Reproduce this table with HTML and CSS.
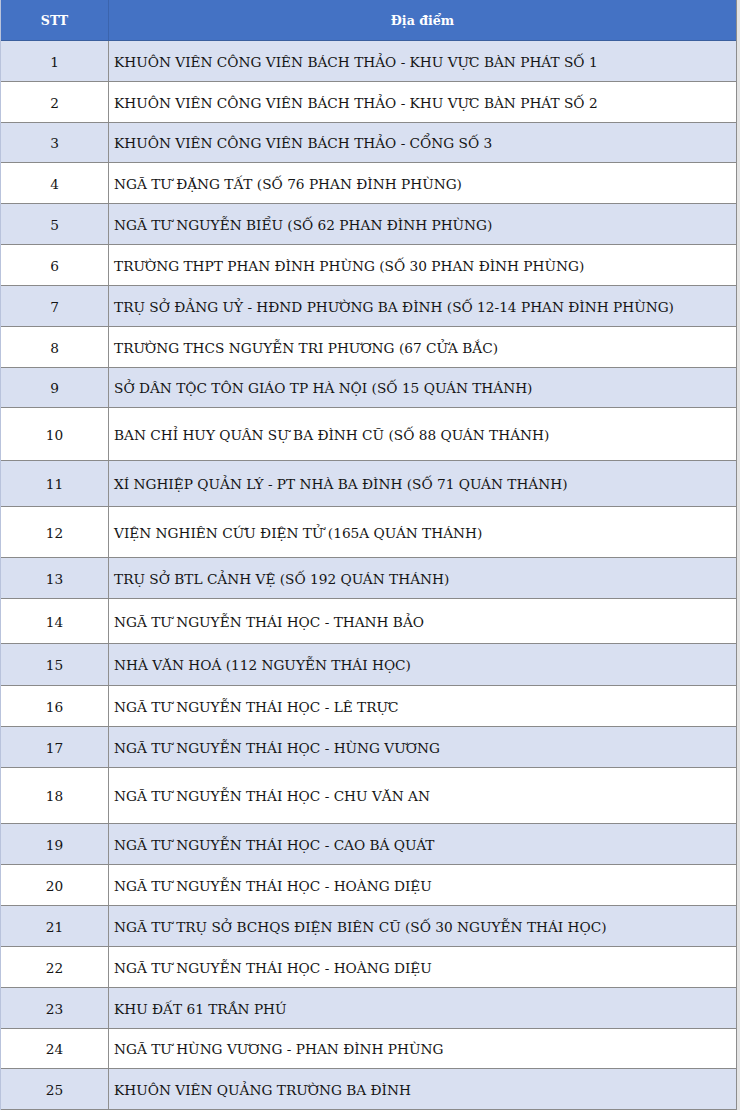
FILE: index.html
```html
<!DOCTYPE html>
<html lang="vi">
<head>
<meta charset="utf-8">
<title>Danh sách địa điểm</title>
<link rel="stylesheet" href="styles.css">
</head>
<body>
<div class="sheet">
  <div class="row head h41"><div class="no">STT</div><div class="place">Địa điểm</div></div>
  <div class="row alt h41"><div class="no">1</div><div class="place">KHUÔN VIÊN CÔNG VIÊN BÁCH THẢO - KHU VỰC BÀN PHÁT SỐ 1</div></div>
  <div class="row h41"><div class="no">2</div><div class="place">KHUÔN VIÊN CÔNG VIÊN BÁCH THẢO - KHU VỰC BÀN PHÁT SỐ 2</div></div>
  <div class="row alt h40"><div class="no">3</div><div class="place">KHUÔN VIÊN CÔNG VIÊN BÁCH THẢO - CỔNG SỐ 3</div></div>
  <div class="row h41"><div class="no">4</div><div class="place">NGÃ TƯ ĐẶNG TẤT (SỐ 76 PHAN ĐÌNH PHÙNG)</div></div>
  <div class="row alt h41"><div class="no">5</div><div class="place">NGÃ TƯ NGUYỄN BIỂU (SỐ 62 PHAN ĐÌNH PHÙNG)</div></div>
  <div class="row h41"><div class="no">6</div><div class="place">TRƯỜNG THPT PHAN ĐÌNH PHÙNG (SỐ 30 PHAN ĐÌNH PHÙNG)</div></div>
  <div class="row alt h41"><div class="no">7</div><div class="place">TRỤ SỞ ĐẢNG UỶ - HĐND PHƯỜNG BA ĐÌNH (SỐ 12-14 PHAN ĐÌNH PHÙNG)</div></div>
  <div class="row h41"><div class="no">8</div><div class="place">TRƯỜNG THCS NGUYỄN TRI PHƯƠNG (67 CỬA BẮC)</div></div>
  <div class="row alt h40"><div class="no">9</div><div class="place">SỞ DÂN TỘC TÔN GIÁO TP HÀ NỘI (SỐ 15 QUÁN THÁNH)</div></div>
  <div class="row h53"><div class="no">10</div><div class="place">BAN CHỈ HUY QUÂN SỰ BA ĐÌNH CŨ (SỐ 88 QUÁN THÁNH)</div></div>
  <div class="row alt h46"><div class="no">11</div><div class="place">XÍ NGHIỆP QUẢN LÝ - PT NHÀ BA ĐÌNH (SỐ 71 QUÁN THÁNH)</div></div>
  <div class="row h51"><div class="no">12</div><div class="place">VIỆN NGHIÊN CỨU ĐIỆN TỬ (165A QUÁN THÁNH)</div></div>
  <div class="row alt h41"><div class="no">13</div><div class="place">TRỤ SỞ BTL CẢNH VỆ (SỐ 192 QUÁN THÁNH)</div></div>
  <div class="row h45"><div class="no">14</div><div class="place">NGÃ TƯ NGUYỄN THÁI HỌC - THANH BẢO</div></div>
  <div class="row alt h42"><div class="no">15</div><div class="place">NHÀ VĂN HOÁ (112 NGUYỄN THÁI HỌC)</div></div>
  <div class="row h41"><div class="no">16</div><div class="place">NGÃ TƯ NGUYỄN THÁI HỌC - LÊ TRỰC</div></div>
  <div class="row alt h41"><div class="no">17</div><div class="place">NGÃ TƯ NGUYỄN THÁI HỌC - HÙNG VƯƠNG</div></div>
  <div class="row h56"><div class="no">18</div><div class="place">NGÃ TƯ NGUYỄN THÁI HỌC - CHU VĂN AN</div></div>
  <div class="row alt h41"><div class="no">19</div><div class="place">NGÃ TƯ NGUYỄN THÁI HỌC - CAO BÁ QUÁT</div></div>
  <div class="row h41"><div class="no">20</div><div class="place">NGÃ TƯ NGUYỄN THÁI HỌC - HOÀNG DIỆU</div></div>
  <div class="row alt h41"><div class="no">21</div><div class="place">NGÃ TƯ TRỤ SỞ BCHQS ĐIỆN BIÊN CŨ (SỐ 30 NGUYỄN THÁI HỌC)</div></div>
  <div class="row h41"><div class="no">22</div><div class="place">NGÃ TƯ NGUYỄN THÁI HỌC - HOÀNG DIỆU</div></div>
  <div class="row alt h41"><div class="no">23</div><div class="place">KHU ĐẤT 61 TRẦN PHÚ</div></div>
  <div class="row h40"><div class="no">24</div><div class="place">NGÃ TƯ HÙNG VƯƠNG - PHAN ĐÌNH PHÙNG</div></div>
  <div class="row alt h41"><div class="no">25</div><div class="place">KHUÔN VIÊN QUẢNG TRƯỜNG BA ĐÌNH</div></div>
</div>
</body>
</html>
```
FILE: styles.css
```css
html, body {
  margin: 0;
  padding: 0;
}
body {
  background: #e4e4e4;
  font-family: "DejaVu Serif", "Liberation Serif", serif;
  color: #141414;
}
.sheet {
  width: 737px;
  height: 1110px;
  overflow: hidden;
  background: #ffffff;
  border-right: 1px solid #8c8c8c;
  border-left: 1px solid #b9c3dc;
  box-sizing: border-box;
}
.row {
  display: grid;
  grid-template-columns: 108px 1fr;
  box-sizing: border-box;
  border-bottom: 1px solid #8a8a8a;
  background: #ffffff;
  font-size: 13.7px;
}
.row.alt {
  background: #d9e0f1;
}
.row.head {
  background: #4472c4;
  color: #ffffff;
  font-weight: bold;
  font-size: 12.6px;
  border-bottom-color: #3a5f9e;
}
.no {
  display: flex;
  align-items: center;
  justify-content: center;
  padding-top: 1px;
  border-right: 1px solid #8f8f8f;
}
.head .no {
  border-right-color: #3b64ad;
  padding-top: 0;
}
.place {
  display: flex;
  align-items: center;
  padding-left: 5px;
  padding-top: 1px;
  white-space: nowrap;
}
.head .place {
  justify-content: center;
  padding-left: 0;
  padding-top: 0;
}
.h40 { height: 40px; }
.h41 { height: 41px; }
.h42 { height: 42px; }
.h45 { height: 45px; }
.h46 { height: 46px; }
.h51 { height: 51px; }
.h53 { height: 53px; }
.h56 { height: 56px; }
```
